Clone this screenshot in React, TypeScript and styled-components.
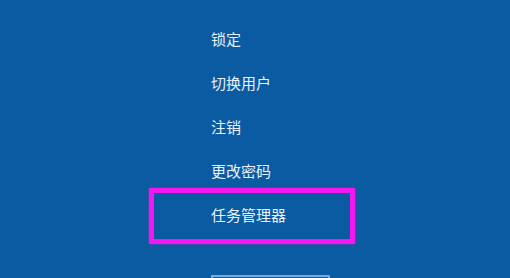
import React from 'react'
import styled, { createGlobalStyle } from 'styled-components'

const GlobalStyle = createGlobalStyle`
  html, body {
    margin: 0;
    padding: 0;
    background: #0b5ba2;
    overflow: hidden;
  }
`

const Screen = styled.div`
  width: 510px;
  height: 278px;
  background: #0b5ba2;
  overflow: hidden;
  font-family: "Noto Sans CJK SC", "Microsoft YaHei", sans-serif;
`

const Menu = styled.ul`
  list-style: none;
  margin: 0;
  padding: 17px 0 0 211px;
  display: flex;
  flex-direction: column;
`

const Item = styled.li<{ $marked?: boolean }>`
  position: relative;
  height: 44px;
  line-height: 44px;
  font-size: 15px;
  color: #e9f1f9;
  cursor: default;

  ${(p) =>
    p.$marked &&
    `
    &::after {
      content: '';
      position: absolute;
      top: -5px;
      bottom: -7px;
      left: -62px;
      width: 206px;
      box-sizing: border-box;
      border: 5px solid #f516f0;
      box-shadow: 0 0 2px rgba(245, 22, 240, 0.6);
    }
  `}
`

// the cancel button only peeks in at the bottom edge
const CancelButton = styled.button`
  display: block;
  margin: 38px 0 0 211px;
  width: 119px;
  height: 32px;
  border: 2px solid #7ea8d2;
  background: transparent;
`

const items = ['锁定', '切换用户', '注销', '更改密码', '任务管理器']

const App = () => {
  return (
    <Screen>
      <GlobalStyle />
      <Menu>
        {items.map((label, i) => (
          <Item key={label} $marked={i === 4}>
            {label}
          </Item>
        ))}
      </Menu>
      <CancelButton aria-label="取消" />
    </Screen>
  )
}

export default App
